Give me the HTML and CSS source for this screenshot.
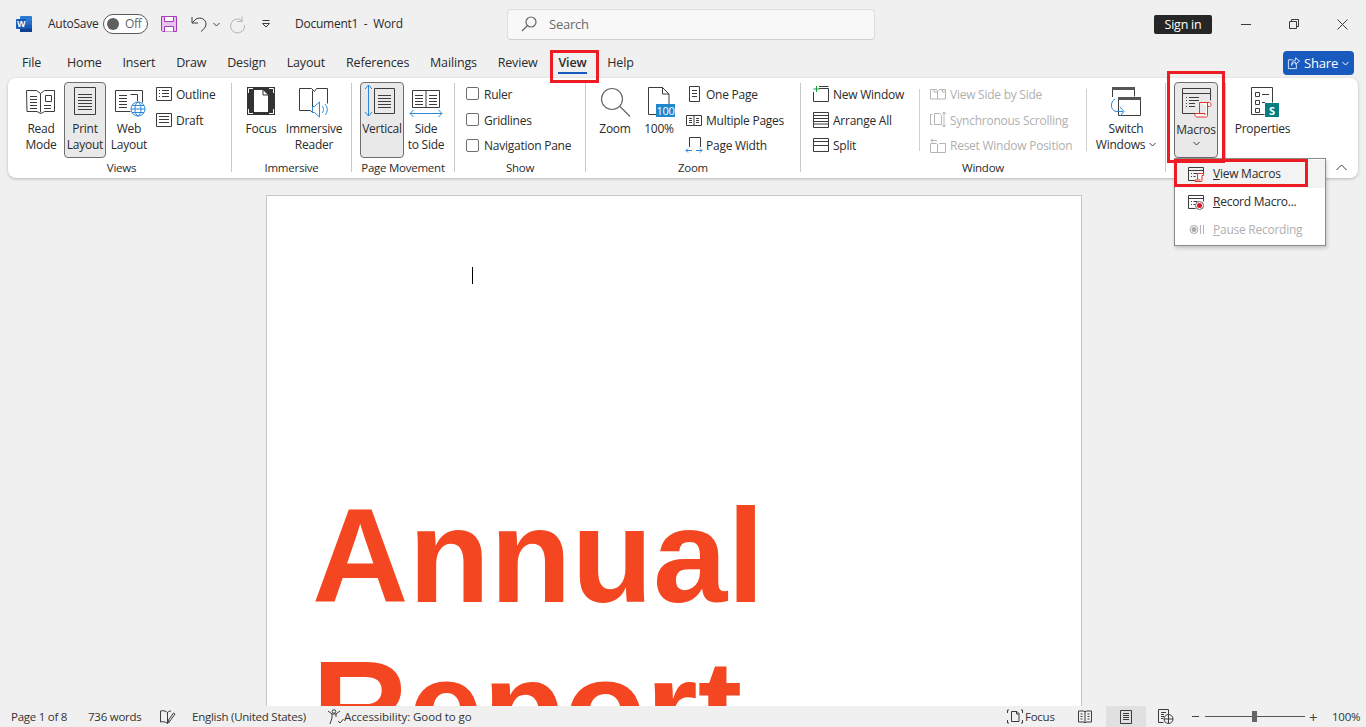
FILE: index.html
```html
<!DOCTYPE html>
<html lang="en">
<head>
<meta charset="utf-8">
<title>Document1 - Word</title>
<link rel="stylesheet" href="styles.css">
</head>
<body>
<header class="titlebar">
  <svg class="t-word" width="16" height="16" viewBox="0 0 16 16"><rect x="4" width="12" height="16" rx="1" fill="#2b7cd3"/><rect x="4" y="5" width="12" height="3.7" fill="#2b6cc4"/><rect x="4" y="8.7" width="12" height="3.6" fill="#185abd"/><rect x="4" y="12.3" width="12" height="3.7" fill="#103f91"/><rect y="3" width="10" height="10" rx="1" fill="#185abd"/><text class="word-w" x="5" y="11">W</text></svg>
  <span class="t-autosave">AutoSave</span>
  <span class="toggle"><i class="knob"></i><span class="toggle-t">Off</span></span>
  <svg class="t-save" width="16" height="16" viewBox="0 0 16 16"><path d="M.5.5h15v15h-14l-1-1z" fill="#e8c3ef" stroke="#a43bb8"/><path d="M3.5.5h9v5h-9zM3.5 15.500v-5h9v5" fill="#fff" stroke="#a43bb8"/></svg>
  <svg class="t-undo" width="16" height="16" viewBox="0 0 16 16"><path class="ic" d="M1 1v6h6M1 7l4-4c5-2.500 10 .5 10 5 0 3-2 5-5 7.500"/></svg>
  <svg class="t-chev" width="7" height="5" viewBox="0 0 7 5"><path class="ic" d="M.5 1l3 3 3-3"/></svg>
  <svg class="t-redo" width="16" height="16" viewBox="0 0 16 16"><path class="ic-off" d="M13 .5v5H8M13.500 5A7 7 0 1 0 15.500 9"/></svg>
  <svg class="t-cust" width="10" height="8" viewBox="0 0 10 8"><path class="ic" d="M1.500.5h7M1.500 3.500l3.500 3.500 3.500-3.500z"/></svg>
  <span class="t-doc">Document1&nbsp; -&nbsp; Word</span>
  <div class="search">
    <svg width="16" height="16" viewBox="0 0 16 16"><circle class="ic-mid" cx="10" cy="6" r="5"/><path class="ic-mid" d="M6.500 9.500L1 15"/></svg>
    <span>Search</span>
  </div>
  <span class="signin">Sign in</span>
  <svg class="t-min" width="10" height="1" viewBox="0 0 10 1"><path class="ic" d="M0 .5h10"/></svg>
  <svg class="t-max" width="10" height="10" viewBox="0 0 10 10"><path class="ic" d="M.5 2.500h7v7h-7zM2.500 2.500v-2h7v7h-2"/></svg>
  <svg class="t-close" width="11" height="11" viewBox="0 0 11 11"><path class="ic" d="M.5.5l10 10M10.500.5l-10 10"/></svg>
</header>

<nav class="tabs">
  <span class="tab tab-file">File</span>
  <span class="tab">Home</span>
  <span class="tab">Insert</span>
  <span class="tab">Draw</span>
  <span class="tab">Design</span>
  <span class="tab">Layout</span>
  <span class="tab">References</span>
  <span class="tab">Mailings</span>
  <span class="tab">Review</span>
  <span class="tab tab-on">View</span>
  <span class="tab">Help</span>
  <span class="share">
    <svg width="12" height="12" viewBox="0 0 15 15"><path class="ic-w" d="M6 3.500H.5v11h10V9M9.500 1l5 4-5 4V6.500C7 6.500 5 8 4.500 10.500c0-4 2-6.500 5-6.500z"/></svg>
    <span>Share</span>
    <svg width="7" height="5" viewBox="0 0 7 5"><path class="ic-w" d="M.5 1l3 3 3-3"/></svg>
  </span>
</nav>

<section class="ribbon">
  <div class="group g-views">
    <div class="body">
      <div class="big">
        <svg width="32" height="32" viewBox="0 0 32 32"><path class="ic" d="M1.500 4.500h10l4 3 4-3h10v21h-10l-3.500 2-.5 0-3.500-2h-10zM15.500 7.500v19"/><path class="ic" d="M5 10.500h7M5 13.500h7M5 16.500h7M5 19.500h7M5 22.500h7M19 19.500h7M19 22.500h7M20.500 9.500h6v6h-6z"/></svg>
        <span>Read<br>Mode</span>
      </div>
      <div class="big on">
        <svg width="32" height="32" viewBox="0 0 32 32"><path class="ic" d="M5.500 1.500h21v27h-21zM9 8.500h14M9 11.500h14M9 14.500h14M9 17.500h14M9 20.500h14M9 23.500h14"/></svg>
        <span>Print<br>Layout</span>
      </div>
      <div class="big">
        <svg width="32" height="32" viewBox="0 0 32 32"><path class="ic" d="M2.500 4.500h27v15M2.500 4.500v21h16M6 9.500h8M6 12.500h8M6 15.500h8M6 18.500h8M6 21.500h8M17.500 8.500h7v7"/><circle cx="25" cy="23" r="8" fill="#fff"/><g class="ic-b"><circle cx="25" cy="23" r="7"/><ellipse cx="25" cy="23" rx="3" ry="7"/><path d="M18 23h14M19 19.500h12M19 26.500h12"/></g></svg>
        <span>Web<br>Layout</span>
      </div>
      <div class="col c-views">
        <div class="row"><svg width="16" height="16" viewBox="0 0 16 16"><path class="ic" d="M.5 1.500h15v13H.5zM3 4.500h1M6 4.500h7M3 7.500h1M6 7.500h7M3 10.500h1M6 10.500h7"/></svg><span>Outline</span></div>
        <div class="row"><svg width="16" height="16" viewBox="0 0 16 16"><path class="ic" d="M.5 1.500h15v13H.5zM3 4.500h10M3 7.500h10M3 10.500h10"/></svg><span>Draft</span></div>
      </div>
    </div>
    <div class="label label-views">Views</div>
  </div>
  <i class="sep"></i>
  <div class="group g-imm">
    <div class="body">
      <div class="big">
        <svg width="32" height="32" viewBox="0 0 32 32"><rect x="2" y="1" width="28" height="28" fill="#333"/><path d="M9 4h9l5 5v17H9z" fill="#fff"/><path d="M18 4v5h5" fill="none" stroke="#333"/><path d="M3.500 7V2.500H8M24 2.500h4.500V7M3.500 23v4.500H8M24 27.500h4.500V23" fill="none" stroke="#fff"/></svg>
        <span>Focus</span>
      </div>
      <div class="big wide">
        <svg width="32" height="32" viewBox="0 0 32 32"><path class="ic" d="M1.500 2.500h12l3 3 2-3h11v15M1.500 2.500v22h11l2 2M14.500 4.500v19"/><path class="ic-b" d="M16.500 20.500l5-4.500v15l-5-4.500h-2v-6zM24 20c2 2 2 5 0 7M27 18c3 3 3 8 0 11"/></svg>
        <span>Immersive<br>Reader</span>
      </div>
    </div>
    <div class="label">Immersive</div>
  </div>
  <i class="sep"></i>
  <div class="group g-page">
    <div class="body">
      <div class="big on vertical">
        <svg width="36" height="32" viewBox="0 0 36 32"><path class="ic-b" d="M4.500 -1v31M1 3l3.500-4 3.500 4M1 26l3.500 4 3.500-4"/><path class="ic" d="M10.500 2.500h20v25h-20zM14 9.500h13M14 12.500h13M14 15.500h13M14 18.500h13M14 21.500h13"/></svg>
        <span>Vertical</span>
      </div>
      <div class="big">
        <svg width="32" height="32" viewBox="0 0 32 32"><path class="ic" d="M2.500 4.500h27v17h-27zM16 4.500v17M5 9.500h8M5 12.500h8M5 15.500h8M5 18.500h8M19 9.500h8M19 12.500h8M19 15.500h8M19 18.500h8"/><path class="ic-b" d="M0 27.500h32M3.500 24l-3.500 3.500 3.500 3.500M28.500 24l3.500 3.500-3.500 3.500"/></svg>
        <span>Side<br>to Side</span>
      </div>
    </div>
    <div class="label">Page Movement</div>
  </div>
  <i class="sep"></i>
  <div class="group g-show">
    <div class="body">
      <div class="col">
        <label class="row check"><i class="box"></i><span>Ruler</span></label>
        <label class="row check"><i class="box"></i><span>Gridlines</span></label>
        <label class="row check"><i class="box"></i><span>Navigation Pane</span></label>
      </div>
    </div>
    <div class="label">Show</div>
  </div>
  <i class="sep"></i>
  <div class="group g-zoom">
    <div class="body">
      <div class="big">
        <svg width="32" height="32" viewBox="0 0 32 32"><circle class="ic-mid" cx="13" cy="13" r="10.500"/><path class="ic-mid" d="M21 20.500l10 10"/></svg>
        <span>Zoom</span>
      </div>
      <div class="big">
        <svg width="32" height="32" viewBox="0 0 32 32"><path class="ic" d="M13 28.500H5.500v-27h14l6.500 6.500v10M19.500 1.500V8H26"/><rect x="13" y="18" width="19" height="13" fill="#1e87cd"/><text class="pct" x="22.500" y="29">100</text></svg>
        <span>100%</span>
      </div>
      <div class="col c-zoom">
        <div class="row"><svg width="16" height="16" viewBox="0 0 16 16"><path class="ic" d="M3.500.5h10v15h-10zM6 4.500h5M6 7.500h5M6 10.500h5"/></svg><span>One Page</span></div>
        <div class="row"><svg width="16" height="16" viewBox="0 0 16 16"><path class="ic" d="M.5 3.500h15v10H.5zM8 3.500v10M3 6.500h3M3 8.500h3M3 10.500h3M10 6.500h3M10 8.500h3M10 10.500h3"/></svg><span>Multiple Pages</span></div>
        <div class="row"><svg width="16" height="16" viewBox="0 0 16 16"><path class="ic" d="M3.500 10V.5h11V10"/><path class="ic-b" d="M0 13.500h6M10 13.500h6M2 11.500l-2 2 2 2M14 11.500l2 2-2 2"/></svg><span>Page Width</span></div>
      </div>
    </div>
    <div class="label">Zoom</div>
  </div>
  <i class="sep"></i>
  <div class="group g-window">
    <div class="body">
      <div class="col c-win1">
        <div class="row"><svg width="16" height="16" viewBox="0 0 16 16"><path class="ic" d="M.5 6v9.500h15V2.500H6M6 .5h9.500"/><path class="ic-g" d="M3.500 0v6M.5 3h6"/></svg><span>New Window</span></div>
        <div class="row"><svg width="16" height="16" viewBox="0 0 16 16"><path class="ic" d="M.5.5h15v15H.5zM.5 3.500h15M.5 6.500h15M.5 9.500h15M.5 12h15"/></svg><span>Arrange All</span></div>
        <div class="row"><svg width="16" height="16" viewBox="0 0 16 16"><path class="ic" d="M.5 1.500h15v13H.5zM.5 4.500h15M.5 8.500h15"/></svg><span>Split</span></div>
      </div>
      <i class="sep-in"></i>
      <div class="col c-win2 off">
        <div class="row"><svg width="16" height="16" viewBox="0 0 16 16"><path class="ic-off" d="M.5 3.500h6l1 1.500v8H.5zM8.500 5l1-1.500h6v9.500h-8M4 3.500V6h3.500M12.500 3.500V6h3"/></svg><span>View Side by Side</span></div>
        <div class="row"><svg width="16" height="16" viewBox="0 0 16 16"><path class="ic-off" d="M2.500 2.500h-2v10h2M4.500 1.500h5l2 2v9h-7zM14 0v15M12 2l2-2 2 2M12 13l2 2 2-2"/></svg><span>Synchronous Scrolling</span></div>
        <div class="row"><svg width="16" height="16" viewBox="0 0 16 16"><path class="ic-off" d="M.5 6.500h6l1 1v8H.5zM8.500 7.500l1-1h6v9h-8M7 3.500H1M3 1.500l-2 2 2 2"/></svg><span>Reset Window Position</span></div>
      </div>
      <i class="sep-in s2"></i>
      <div class="big switch">
        <svg width="32" height="32" viewBox="0 0 32 32"><path class="ic" d="M2.500 11V1.500h22v9"/><path d="M2 1h23v3H2z" fill="#555"/><path class="ic" d="M8.500 11.500h22v18h-22z" fill="#fff"/><path d="M8 11h23v3H8z" fill="#555"/><path class="ic-b" d="M5 13c-5 3-5 11 1 12.500h7M10 21l4 4.500-4 4.500"/></svg>
        <span>Switch<br>Windows<svg class="mini" width="7" height="5" viewBox="0 0 7 5"><path class="ic" d="M.5 1l3 3 3-3"/></svg></span>
      </div>
    </div>
    <div class="label">Window</div>
  </div>
  <i class="sep"></i>
  <div class="group g-macro">
    <div class="body">
      <div class="big on macros">
        <svg width="32" height="32" viewBox="0 0 32 32"><path class="ic" d="M2.500 2.500h28v12M2.500 2.500v25h13M2.500 7.500h28"/><path class="ic" d="M6 11.500h1M9 11.500h10M6 14.500h1M9 14.500h10M6 17.500h1M9 17.500h6M6 20.500h1M9 20.500h6"/><path class="ic-r" d="M19.500 16.500h10c2 0 2 4 0 4h-2M19.500 16.500v11M27.500 16.500v13c0 1-1 1.500-2 1.500h-9c-1 0-1.500-1-1.500-1.500v-2h10v1.500"/></svg>
        <span>Macros</span>
        <svg class="mchev" width="7" height="5" viewBox="0 0 7 5"><path class="ic" d="M.5 1l3 3 3-3"/></svg>
      </div>
    </div>
  </div>
  <i class="sep"></i>
  <div class="group g-prop">
    <div class="body">
      <div class="big">
        <svg width="34" height="32" viewBox="0 0 34 32"><path class="ic" d="M5.500 1.500h21v15M5.500 1.500v27h13"/><path class="ic" d="M9.500 6.500h4v4h-4zM9.500 14.500h4v4h-4zM9.500 22.500h4v4h-4zM16 8.500h7M16 16.500h3"/><rect x="19" y="17" width="14" height="14" fill="#037f81"/><text class="sp" x="26" y="28.500">S</text></svg>
        <span>Properties</span>
      </div>
    </div>
  </div>
  <svg class="collapse" width="11" height="7" viewBox="0 0 11 7"><path class="ic" d="M.5 6l5-5 5 5"/></svg>
</section>

<main class="doc">
  <article class="page">
    <i class="caret"></i>
    <h1 class="title">Annual<br>Report</h1>
  </article>
</main>

<footer class="status">
  <span class="s1">Page 1 of 8</span>
  <span class="s2t">736 words</span>
  <svg class="s-proof" width="16" height="14" viewBox="0 0 16 14"><path class="ic" d="M7.500 2.500c-2-2-5-2-7-1.500v11c2-.5 5-.5 7 1.500 .5-.5 1-1 2-1.200M7.500 2.500v11M7.500 2.500c1-1 2-1.500 3.500-1.500"/><path class="ic" d="M10 11l5-7-1.500-1-5 7-.5 2z"/></svg>
  <span class="s-lang">English (United States)</span>
  <svg class="s-acc" width="17" height="16" viewBox="0 0 17 16"><circle class="ic" cx="7" cy="2.500" r="1.800"/><path class="ic" d="M1 2l4 3h4l4-3M5 5v4l-2 6M9 5v3M11 12l2 2 3.500-4"/></svg>
  <span class="s-acct">Accessibility: Good to go</span>
  <span class="s-right">
    <svg class="s-focus" width="16" height="15" viewBox="0 0 16 15"><path class="ic" d="M4.500 2.500H10l2 2v8H4.500zM9.500 2.500V5H12M2 1H.5v3M.5 11v3H2M14 1h1.500v3M15.500 11v3H14"/></svg>
    <span class="s-focust">Focus</span>
    <svg class="s-read" width="14" height="14" viewBox="0 0 14 14"><path class="ic" d="M.5 1h5.500l1 1 1-1h5.500v11H8l-1 1-1-1H.5zM7 2v10M2.500 4h2M2.500 6.500h2M2.500 9h2M9.500 4h2M9.500 6.500h2M9.500 9h2"/></svg>
    <span class="s-print"><svg width="12" height="14" viewBox="0 0 12 14"><path class="ic" d="M.5.500h11v13H.5zM3 3.500h6M3 5.500h6M3 7.500h6M3 9.500h6"/></svg></span>
    <svg class="s-web" width="16" height="15" viewBox="0 0 16 15"><path class="ic" d="M.5.500h10v5M.5.500v13h5M3 3.500h5M3 5.500h3M3 7.500h3M3 9.500h2"/><g class="ic"><circle cx="10.500" cy="10" r="4.500"/><path d="M6 10h9M10.500 5.500v9"/></g></svg>
    <span class="s-minus"></span>
    <span class="slider"><i class="thumb"></i></span>
    <span class="s-plus">+</span>
    <span class="s-zoom">100%</span>
  </span>
</footer>

<div class="menu">
  <div class="mi hot"><svg width="16" height="16" viewBox="0 0 16 16"><path class="ic" d="M.5 1.500h15v6M.5 1.500v13h7M.5 4.500h15M3 7.500h1M5.500 7.500h4M3 10.500h1M5.500 10.500h2"/><path class="ic-r" d="M9.500 7.500h6v2h-1.500v5c0 1-.5 1-1 1h-6v-1.500h5.500M9.500 7.500v6"/></svg><span><u>V</u>iew Macros</span></div>
  <div class="mi"><svg width="16" height="16" viewBox="0 0 16 16"><path class="ic" d="M.5 1.500h15v6M.5 1.500v13h7M.5 4.500h15M3 7.500h1M5.500 7.500h4M3 10.500h1M5.500 10.500h2"/><circle cx="11.500" cy="11.500" r="4" fill="#fff" stroke="#666"/><circle cx="11.500" cy="11.500" r="2.500" fill="#e81123"/></svg><span><u>R</u>ecord Macro...</span></div>
  <div class="mi off"><svg width="16" height="16" viewBox="0 0 16 16"><circle cx="6" cy="7.500" r="4" fill="#fff" stroke="#aaa"/><circle cx="6" cy="7.500" r="2.500" fill="#aaa"/><path class="ic-off" d="M12.500 3v9M15.500 3v9"/></svg><span><u>P</u>ause Recording</span></div>
</div>

<i class="mark m-view"></i>
<i class="mark m-macros"></i>
<i class="mark m-item"></i>
</body>
</html>
```
FILE: styles.css
```css
* { box-sizing: border-box; }
html, body { height: 100%; }
body {
  margin: 0;
  position: relative;
  display: flex;
  flex-direction: column;
  overflow: hidden;
  background: #f0f0f0;
  color: #2b2b2b;
  font: 12px/16px "Open Sans", "Noto Sans", "Liberation Sans", sans-serif;
  letter-spacing: -0.25px;
}
i { display: block; font-style: normal; }
svg { display: block; flex: none; overflow: visible; }

.ic { fill: none; stroke: #3c3c3c; stroke-width: 1; }
.ic-mid { fill: none; stroke: #666; stroke-width: 1.2; }
.ic-off { fill: none; stroke: #b4b4b4; stroke-width: 1; }
.ic-b { fill: none; stroke: #2b88d8; stroke-width: 1; }
.ic-g { fill: none; stroke: #1a9a3a; stroke-width: 1; }
.ic-r { fill: #fff; stroke: #e6342c; stroke-width: 1; }
.ic-w { fill: none; stroke: #fff; stroke-width: 1; }

/* title bar */
.titlebar { height: 48px; display: flex; align-items: center; flex: none; }
.t-word { margin-left: 16px; }
.word-w { fill: #fff; font: bold 9px "Liberation Sans", sans-serif; text-anchor: middle; }
.t-autosave { margin-left: 16px; width: 55px; }
.toggle {
  width: 45px; height: 20px; border: 1px solid #5a5a5a; border-radius: 10px;
  display: flex; align-items: center; padding-left: 3px; background: #fff;
}
.knob { width: 12px; height: 12px; border-radius: 50%; background: #5f5f5f; }
.toggle-t { margin-left: 6px; color: #666; }
.t-save { margin-left: 13px; }
.t-undo { margin-left: 14px; }
.t-chev { margin-left: 6px; }
.t-redo { margin-left: 9px; }
.t-cust { margin-left: 16px; }
.t-doc { margin-left: 24px; width: 130px; white-space: nowrap; }
.search {
  margin-left: 82px; width: 368px; height: 31px;
  background: #f8f8f8; border: 1px solid #dedede; border-bottom-color: #cfcfcf; border-radius: 4px;
  display: flex; align-items: center; padding-left: 13px; gap: 12px; color: #6b6b6b; font-size: 13px;
}
.signin {
  margin-left: 279px; width: 58px; height: 19px; background: #262626; color: #fff;
  border-radius: 2px; text-align: center; line-height: 20px; font-size: 12.500px;
}
.t-min { margin-left: 29px; }
.t-max { margin-left: 38px; }
.t-close { margin-left: 38px; }

/* tabs */
.tabs {
  height: 30px; flex: none; display: flex; align-items: flex-start;
  padding: 7px 0 0 22px; gap: 20.800px; font-size: 12.500px; letter-spacing: -0.15px; position: relative;
}
.tab { position: relative; white-space: nowrap; }
.tab-file { margin-right: 5px; }
.tab-on { font-weight: 600; }
.tab-on::after { content: ""; position: absolute; left: 0; right: 0; top: 17px; height: 2px; background: #185abd; }
.share {
  position: absolute; left: 1283px; top: 3px; width: 71px; height: 24px; background: #185abd; color: #fff;
  border-radius: 4px; display: flex; align-items: center; padding-left: 5px; gap: 4px; font-size: 13px;
}

/* ribbon */
.ribbon {
  position: relative; z-index: 1; flex: none; height: 100px; margin: 0 8px; padding-top: 4px;
  background: #fff; border-radius: 8px; display: flex;
  box-shadow: 0 1px 3px rgba(0, 0, 0, .25);
}
.group { display: flex; flex-direction: column; height: 92px; flex: none; }
.body { height: 76px; display: flex; }
.label { height: 16px; margin-top: 2px; text-align: center; white-space: nowrap; font-size: 11.500px; }
.label-views { padding-left: 4px; }
.sep { width: 1px; height: 89px; margin-top: 1px; background: #c9c9c9; flex: none; }
.sep-in { width: 1px; height: 62px; margin-top: 7px; background: #d0d0d0; flex: none; }

.g-views { width: 223px; }
.g-views .body { padding-left: 12px; gap: 2px; }
.g-imm { width: 119px; }
.g-imm .body { padding-left: 8px; gap: 4px; }
.g-page { width: 102px; }
.g-page .body { padding-left: 8px; gap: 1px; }
.g-show { width: 130px; }
.g-show .body { padding-left: 11px; }
.g-zoom { width: 214px; }
.g-zoom .body { padding-left: 8px; gap: 2px; }
.g-window { width: 364px; }
.g-window .body { padding-left: 12px; }
.g-macro { width: 59px; }
.g-macro .body { padding-left: 8px; }
.g-prop { width: 73px; }
.g-prop .body { padding-left: 8px; }

.big {
  width: 42px; height: 76px; flex: none;
  display: flex; flex-direction: column; align-items: center;
  text-align: center; white-space: nowrap; border-radius: 4px;
  border: 1px solid transparent;
  padding-top: 3px;
}
.big > span { margin-top: 2.500px; }
.big.on { background: #e9e9e9; border-color: #6e6e6e; }
.wide { width: 56px; }
.vertical { width: 44px; }
.macros { width: 44px; }
.macros > span { margin-top: 4px; }
.mchev { margin-top: 3px; }
.g-prop .big { width: 57px; }
.switch { width: 62px; margin-left: 8px; }
.mini { display: inline-block; margin-left: 4px; vertical-align: 2px; }

.col { display: flex; flex-direction: column; margin-top: -1px; flex: none; }
.row { height: 26px; display: flex; align-items: center; gap: 4px; white-space: nowrap; }
.row span { margin-top: 2px; }
.c-views { margin-left: 4px; }
.c-zoom { margin-left: 4px; }
.c-win1 { width: 106px; }
.c-win2 { margin-left: 10px; width: 156px; }
.s2 { flex: none; }
.off { color: #b0b0b0; }
.check { gap: 5px; }
.box { width: 13px; height: 13px; border: 1px solid #6e6e6e; border-radius: 2px; }
.pct { fill: #fff; font: 11px "Open Sans", sans-serif; text-anchor: middle; letter-spacing: -.3px; }
.sp { fill: #fff; font: bold 11px "Open Sans", sans-serif; text-anchor: middle; }
.collapse { position: absolute; left: 1328px; top: 86px; }

/* document */
.doc { flex: 1; min-height: 0; overflow: hidden; padding: 17px 0 0 266px; }
.page { width: 816px; height: 1056px; background: #fff; border: 1px solid #c6c6c6; padding-left: 45px; }
.caret { width: 1px; height: 17px; margin: 71px 0 0 160px; background: #000; }
.title {
  margin: 196px 0 0; color: #f44721;
  font: bold 133.500px/152px "Liberation Sans", Arial, sans-serif; letter-spacing: 0;
}

/* status bar */
.status {
  height: 21px; flex: none; display: flex; align-items: center; background: #f0f0f0;
  font-size: 11.500px; color: #333; position: relative; z-index: 1; white-space: nowrap;
}
.status span { padding-top: 1px; }
.s1 { margin-left: 11px; width: 77px; }
.s2t { width: 72px; }
.s-proof { margin-right: 16px; }
.s-lang { width: 135px; }
.s-acct { letter-spacing: -0.08px; }
.s-right { margin-left: auto; display: flex; align-items: center; height: 21px; }
.status .s-right, .status .s-print { padding-top: 0; }
.s-focust { margin-left: 2px; width: 53px; }
.s-print { margin-left: 14px; width: 40px; height: 21px; background: #e0e0e0; display: flex; align-items: center; justify-content: center; }
.s-web { margin-left: 12px; }
.s-minus { margin-left: 18px; width: 7px; height: 1px; background: #444; padding: 0; }
.status .s-minus, .status .slider { padding: 0; }
.slider { position: relative; margin-left: 6px; width: 100px; height: 1px; background: #555; }
.thumb { position: absolute; left: 47px; top: -5px; width: 5px; height: 11px; background: #666; }
.s-plus { margin-left: 4px; width: 23px; font-size: 15px; color: #444; }
.s-zoom { width: 34px; }

/* dropdown */
.menu {
  position: absolute; z-index: 2; left: 1174px; top: 158px; width: 152px; height: 88px;
  background: #fff; border: 1px solid #8c8c8c; padding-top: 1px;
  box-shadow: 1px 2px 4px rgba(0, 0, 0, .2);
}
.mi { height: 28px; display: flex; align-items: center; padding-left: 13px; gap: 9px; white-space: nowrap; }
.hot { background: #f3f3f3; }
.mi.off { color: #b0b0b0; }

/* red callouts */
.mark { position: absolute; z-index: 3; border: 3px solid #ed1c24; }
.m-view { left: 550px; top: 50px; width: 49px; height: 33px; }
.m-macros { left: 1167px; top: 71px; width: 58px; height: 92px; }
.m-item { left: 1174px; top: 159px; width: 134px; height: 28px; }
```
